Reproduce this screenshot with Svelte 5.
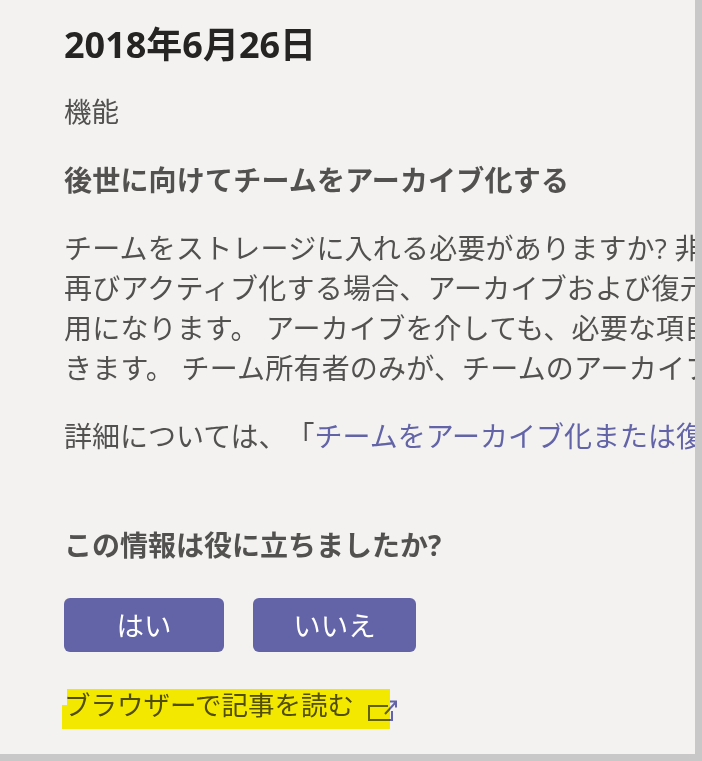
<script>
    const lines = [
        'チームをストレージに入れる必要がありますか? 非アクティブなチームを',
        '再びアクティブ化する場合、アーカイブおよび復元の機能が',
        '用になります。 アーカイブを介しても、必要な項目は保持で',
        'きます。 チーム所有者のみが、チームのアーカイブを実行',
    ];
</script>

<div class="page">
    <div class="content">
        <h1>2018年6月26日</h1>
        <p class="label">機能</p>
        <h2>後世に向けてチームをアーカイブ化する</h2>
        <p class="body">
            {#each lines as line}
                <span>{line}</span>
            {/each}
        </p>
        <p class="more">詳細については、「<a href="#top">チームをアーカイブ化または復元する</a>」</p>

        <h3>この情報は役に立ちましたか?</h3>
        <div class="buttons">
            <button class="yes">はい</button>
            <button class="no">いいえ</button>
        </div>
        <a class="article" href="#top">
            ブラウザーで記事を読む
            <svg width="30" height="24" viewBox="0 0 30 24" fill="none" stroke="#6264a7" stroke-width="2">
                <path d="M21 7H2V21H25V12" />
                <path d="M18 15L28.500 3.500M23 2.500H29V8.500" />
            </svg>
        </a>
    </div>
    <div class="hl hl-top"></div>
    <div class="hl hl-bottom"></div>
</div>

<style>
    :global(body) {
        margin: 0;
    }

    .page {
        position: relative;
        width: 702px;
        height: 761px;
        box-sizing: border-box;
        overflow: hidden;
        background: #f3f2f1;
        border-right: 7px solid #c8c8c8;
        border-bottom: 7px solid #c8c8c8;
        font-family: "Open Sans", "Noto Sans CJK JP", sans-serif;
        color: #525150;
        text-spacing-trim: space-all;
    }

    .content {
        padding: 22px 0 0 64px;
        white-space: nowrap;
    }

    h1 {
        margin: 0;
        font-size: 36px;
        line-height: 46px;
        font-weight: 700;
        color: #252423;
    }

    .label {
        margin: 24px 0 0;
        font-size: 27.500px;
        line-height: 40px;
    }

    h2 {
        margin: 28px 0 0;
        font-size: 28px;
        line-height: 40px;
        font-weight: 700;
        letter-spacing: 0.2px;
    }

    .body {
        margin: 28px 0 0;
        font-size: 28px;
        line-height: 40px;
        letter-spacing: 0.2px;
    }

    .body span {
        display: block;
    }

    .more {
        margin: 28px 0 0;
        font-size: 28px;
        line-height: 40px;
    }

    .more a {
        color: #6264a7;
        text-decoration: none;
    }

    h3 {
        margin: 69px 0 0;
        font-size: 28px;
        line-height: 40px;
        font-weight: 700;
    }

    .buttons {
        display: flex;
        gap: 29px;
        margin-top: 33px;
    }

    button {
        height: 54px;
        padding: 0 0 3px;
        border: none;
        border-radius: 6px;
        background: #6264a7;
        color: #fff;
        font-family: inherit;
        font-size: 27.500px;
    }

    .yes {
        width: 160px;
    }

    .no {
        width: 163px;
    }

    .article {
        display: flex;
        align-items: flex-end;
        gap: 13px;
        margin-top: 35px;
        font-size: 26.500px;
        line-height: 36px;
        color: #525150;
        text-decoration: none;
    }

    .hl {
        position: absolute;
        background: #fff600;
        mix-blend-mode: multiply;
    }

    .hl-top {
        left: 67px;
        top: 689px;
        width: 323px;
        height: 16px;
    }

    .hl-bottom {
        left: 62px;
        top: 705px;
        width: 328px;
        height: 24px;
    }
</style>
